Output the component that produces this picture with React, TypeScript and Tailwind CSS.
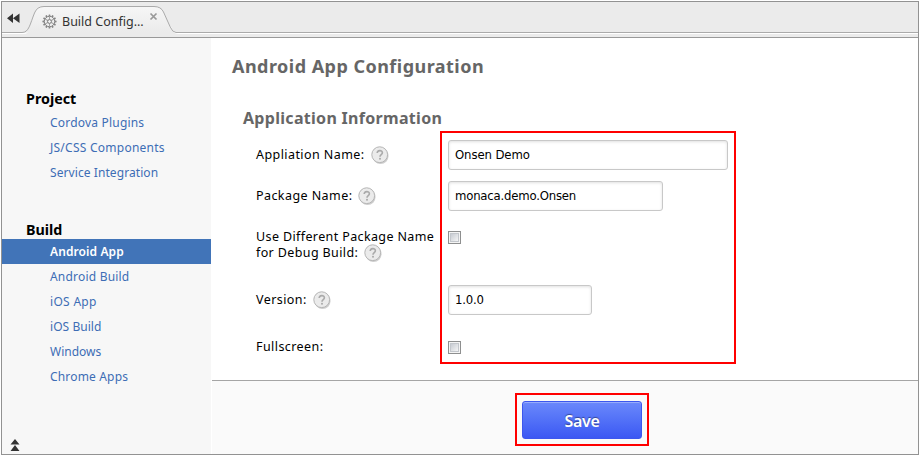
import React from "react";

const LABEL = "font-['Noto_Sans','Open_Sans',sans-serif]";

type LinkItem = { text: string; cls: string; active?: boolean };

const projectLinks: LinkItem[] = [
  { text: "Cordova Plugins", cls: "tracking-[0.2px]" },
  { text: "JS/CSS Components", cls: "tracking-[0.25px]" },
  { text: "Service Integration", cls: "tracking-[0.08px]" },
];

const buildLinks: LinkItem[] = [
  { text: "Android App", cls: "tracking-[0.1px]", active: true },
  { text: "Android Build", cls: "tracking-[0.2px]" },
  { text: "iOS App", cls: "tracking-[0.3px]" },
  { text: "iOS Build", cls: "tracking-[0.05px]" },
  { text: "Windows", cls: "tracking-normal" },
  { text: "Chrome Apps", cls: "tracking-[0.17px]" },
];

function NavLinks({ items }: { items: LinkItem[] }) {
  return (
    <ul>
      {items.map((item) => (
        <li
          key={item.text}
          className={
            item.active
              ? "flex h-[25px] items-center bg-[#4174b8] pl-12 pt-px text-[12px] font-semibold text-white"
              : "flex h-[25px] items-center pl-12 pt-px text-[12px] text-[#3d6db5]"
          }
        >
          <span className={item.cls}>{item.text}</span>
        </li>
      ))}
    </ul>
  );
}

function Help() {
  return (
    <svg width="18" height="19" viewBox="0 0 18 19" className="shrink-0">
      <circle cx="9.6" cy="10" r="8" fill="#cfcfcf" />
      <circle cx="8.7" cy="8.7" r="7.9" fill="#ebebeb" stroke="#b5b5b5" />
      <path d="M6.2 7.1c0-3.3 5.2-3.3 5.2-.3 0 1.9-2.4 1.9-2.4 4" fill="none" stroke="#aaa" strokeWidth="1.6" />
      <circle cx="9" cy="12.7" r="1" fill="#aaa" />
    </svg>
  );
}

function Gear() {
  const teeth = [0, 30, 60, 90, 120, 150, 180, 210, 240, 270, 300, 330];
  return (
    <svg width="15" height="15" viewBox="0 0 15 15" className="shrink-0">
      {teeth.map((a) => (
        <rect key={a} x="6.6" y="0.4" width="1.8" height="3" rx="0.7" fill="#858585" transform={`rotate(${a} 7.5 7.5)`} />
      ))}
      <circle cx="7.5" cy="7.5" r="5.2" fill="#eee" stroke="#858585" strokeWidth="1" />
      {[0, 60, 120, 180, 240, 300].map((a) => (
        <path key={a} d="M7.5 5.5V2.6" stroke="#9a9a9a" strokeWidth="0.9" transform={`rotate(${a} 7.5 7.5)`} />
      ))}
      <circle cx="7.5" cy="7.5" r="1.9" fill="#f5f5f5" stroke="#777" strokeWidth="1" />
    </svg>
  );
}

function Checkbox() {
  return (
    <span className="flex h-[13px] w-[13px] items-center justify-center border border-[#8e8f8f] bg-[#f4f4f4]">
      <span className="h-[9px] w-[9px] border border-[#c3c7cc] bg-linear-to-br from-[#c8ccd3] to-[#f5f5f5]" />
    </span>
  );
}

function Field({ value, width, spacing }: { value: string; width: string; spacing: string }) {
  return (
    <div
      className={`${width} flex h-[30px] items-center rounded-[3px] border border-[#c8c8c8] bg-white pl-[6px] font-['DejaVu_Sans_Condensed','DejaVu_Sans',sans-serif] text-[13px] text-black shadow-[inset_0_1px_3px_rgba(0,0,0,0.12)]`}
    >
      <span className={`${spacing} [font-stretch:condensed]`}>{value}</span>
    </div>
  );
}

function Row({ height, label, help, children }: { height: string; label: string; help?: boolean; children: React.ReactNode }) {
  return (
    <div className={`${height} flex items-center`}>
      <div className="flex w-[192px] items-center gap-[6px] text-[12.5px] text-black">
        <span className="whitespace-nowrap tracking-[0.43px]">{label}</span>
        {help && <Help />}
      </div>
      {children}
    </div>
  );
}

function TabBar() {
  return (
    <div className="relative h-[36px] border-b border-[#999] bg-[#ebebeb]">
      <svg width="916" height="35" viewBox="2 2 916 35" className="absolute left-0 top-0">
        <defs>
          <linearGradient id="tab" x1="0" y1="0" x2="0" y2="1">
            <stop offset="0" stopColor="#f6f6f6" />
            <stop offset="1" stopColor="#ebebeb" />
          </linearGradient>
        </defs>
        <path d="M2 33.5H24C30 33.5 32 25 36 14M171 27Q173 33.5 178 33.5H918" stroke="#fff" fill="none" />
        <path d="M2 32.5H22C29 32.5 30 24 34.5 13Q37 6.5 44 6.5H154Q161 6.5 163.5 12L170 26.5Q172.500 32.5 176 32.5H918" stroke="#aaa" fill="url(#tab)" />
        <path d="M13 13.5V23L7 18.2zM19.5 13.5V23L13 18.2z" fill="#333" />
        <path d="M150.5 13.5l6 6m0-6l-6 6" stroke="#999" strokeWidth="1.7" />
      </svg>
      <div className="relative flex h-[37px] items-center gap-[5px] pl-10 pt-[2px] text-[12.5px] text-[#333]">
        <Gear />
        <span className="pt-px">Build Config...</span>
      </div>
    </div>
  );
}

export default function App() {
  return (
    <div className={`${LABEL} h-[457px] w-[921px] overflow-hidden bg-white pl-px pt-px`}>
      <div className="relative flex h-[454px] w-[918px] flex-col border border-[#929292]">
        <TabBar />
        <div className="flex min-h-0 flex-1">
          <aside className="flex w-[209px] flex-col bg-[#f7f7f7] pt-[50px]">
            <h2 className="flex h-[22px] items-center pb-px pl-6 text-[14.3px] font-bold text-black">Project</h2>
            <NavLinks items={projectLinks} />
            <h2 className="mt-[34px] flex h-[20px] items-center pl-6 pt-[2px] text-[14.3px] font-bold text-black">Build</h2>
            <NavLinks items={buildLinks} />
            <svg width="10" height="13" viewBox="0 0 10 13" className="ml-2 mt-[50px]" fill="#333">
              <path d="M5 0l4.5 5.5h-9zM5 6l4.5 6h-9z" />
            </svg>
          </aside>
          <main className="flex flex-1 flex-col pl-px">
            <div className="h-[342px] text-[#666]">
              <h1 className="flex h-[56px] items-center pl-5 text-[18px] font-bold">
                <span className="tracking-[0.47px]">Android App Configuration</span>
              </h1>
              <h2 className="flex h-[41px] items-end pb-px pl-[31px] text-[16px] font-bold leading-[32px]">
                <span className="tracking-[0.3px]">Application Information</span>
              </h2>
              <div className="pl-11">
                <Row height="h-10" label="Appliation Name:" help>
                  <Field value="Onsen Demo" width="w-[280px]" spacing="tracking-[-0.1px]" />
                </Row>
                <Row height="h-[42px]" label="Package Name:" help>
                  <Field value="monaca.demo.Onsen" width="w-[215px]" spacing="tracking-[-0.2px]" />
                </Row>
                <div className="flex h-[63px] pt-[12px] text-[12.5px] leading-4 text-black">
                  <div className="w-[192px] whitespace-nowrap tracking-[0.38px]">
                    <div>Use Different Package Name</div>
                    <div className="flex h-4 items-center gap-[6px]">
                      <span>for Debug Build:</span>
                      <Help />
                    </div>
                  </div>
                  <div className="pt-[2px]">
                    <Checkbox />
                  </div>
                </div>
                <Row height="h-[40px]" label="Version:" help>
                  <Field value="1.0.0" width="w-[144px]" spacing="tracking-[-0.2px]" />
                </Row>
                <Row height="h-[54px]" label="Fullscreen:">
                  <Checkbox />
                </Row>
              </div>
            </div>
            <footer className="flex-1 border-t border-[#a5a5a5] bg-[#fafafa] pl-[303px] pt-3">
              <div className="h-[53px] w-[134px] border-2 border-[#f00] pl-[5px] pt-[6px]">
                <button className="flex h-[38px] w-[120px] items-center justify-center rounded-[3px] border border-[#3c57ee] bg-linear-to-b from-[#6b88fb] to-[#3c57f3] pt-[2px] text-[16px] font-semibold tracking-[-0.3px] text-white shadow-[inset_0_1px_0_rgba(255,255,255,0.3)] [text-shadow:0_-1px_1px_rgba(0,0,0,0.4)]">
                  Save
                </button>
              </div>
            </footer>
          </main>
        </div>
        <div className="pointer-events-none absolute left-[438px] top-[129px] h-[233px] w-[296px] border-2 border-[#f00]" />
      </div>
    </div>
  );
}
